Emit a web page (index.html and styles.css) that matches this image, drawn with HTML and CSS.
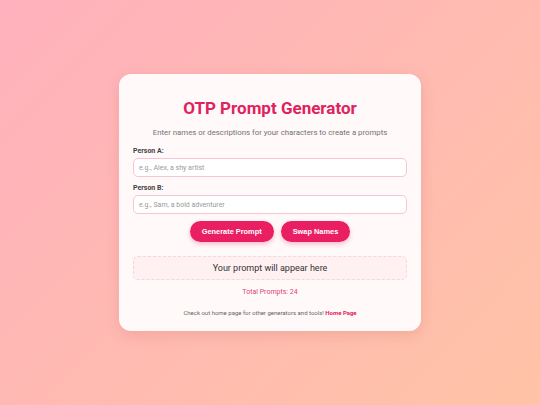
FILE: index.html
```html
<!DOCTYPE html>
<html lang="en">
<head>
<meta charset="utf-8">
<title>OTP Prompt Generator</title>
<link rel="stylesheet" href="styles.css">
</head>
<body>
<main class="card">
  <h1 class="title">OTP Prompt Generator</h1>
  <p class="subtitle">Enter names or descriptions for your characters to create a prompts</p>
  <label class="label" for="a">Person A:</label>
  <input class="field" id="a" type="text" placeholder="e.g., Alex, a shy artist">
  <label class="label label-b" for="b">Person B:</label>
  <input class="field" id="b" type="text" placeholder="e.g., Sam, a bold adventurer">
  <div class="actions">
    <button class="btn">Generate Prompt</button>
    <button class="btn">Swap Names</button>
  </div>
  <div class="output">Your prompt will appear here</div>
  <div class="total">Total Prompts: 24</div>
  <p class="footer">Check out home page for other generators and tools! <a class="home" href="#">Home Page</a></p>
</main>
</body>
</html>
```

FILE: styles.css
```css
* { box-sizing: border-box; }
html, body { height: 100%; }
body {
  margin: 0;
  font-family: Roboto, "Liberation Sans", Arial, sans-serif;
  background: linear-gradient(135deg, #ffb1bd 0%, #ffc3a6 100%);
  display: flex;
  align-items: center;
  justify-content: center;
}
.card {
  width: 302px;
  padding: 14px 14px 14px;
  background: rgba(255, 255, 255, 0.92);
  border-radius: 12px;
  box-shadow: 0 4px 14px rgba(180, 80, 80, 0.18);
  display: flex;
  flex-direction: column;
}
.title {
  margin: 10px 0 0;
  font-size: 17px;
  line-height: 20px;
  font-weight: 700;
  color: #e0225f;
  text-align: center;
}
.subtitle {
  margin: 10px 0 0;
  font-size: 7.8px;
  line-height: 10px;
  color: #737373;
  text-align: center;
}
.label {
  margin-top: 9px;
  font-size: 7px;
  line-height: 9px;
  font-weight: 700;
  color: #444;
}
.label-b { margin-top: 7px; }
.field {
  margin-top: 2px;
  height: 19px;
  width: 100%;
  border: 1px solid #f7c5d4;
  border-radius: 5px;
  padding: 0 5px;
  font-family: Roboto, "Liberation Sans", Arial, sans-serif;
  font-size: 7px;
  background: #fff;
  outline: none;
}
.field::placeholder { color: #9a9a9a; }
.actions {
  margin-top: 7px;
  display: flex;
  justify-content: center;
  gap: 7px;
}
.btn {
  height: 21px;
  padding: 0 12px;
  border: none;
  border-radius: 11px;
  background: #e91e63;
  color: #fff;
  font-family: "Liberation Sans", Arial, sans-serif;
  font-weight: 700;
  font-size: 7.4px;
  box-shadow: 0 2px 5px rgba(233, 30, 99, 0.3);
}
.output {
  margin-top: 14px;
  height: 24px;
  border: 1px dashed #f9d3de;
  border-radius: 5px;
  background: #fff0f2;
  display: flex;
  align-items: center;
  justify-content: center;
  font-size: 9px;
  color: #333;
}
.total {
  margin-top: 8px;
  font-size: 7px;
  line-height: 9px;
  color: #e0457b;
  text-align: center;
}
.footer {
  margin: 12px 0 0;
  font-size: 6px;
  line-height: 8px;
  color: #666;
  text-align: center;
}
.home {
  color: #e0225f;
  font-weight: 700;
  text-decoration: none;
}
```
